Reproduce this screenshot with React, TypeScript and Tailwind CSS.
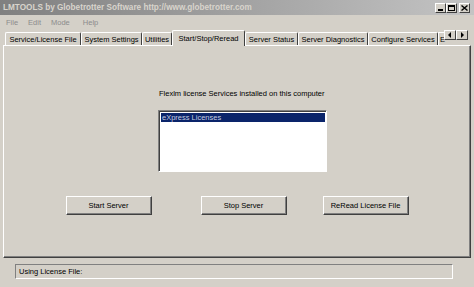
import React from "react";

const tabs = [
  { label: "Service/License File", w: "w-[76px]" },
  { label: "System Settings", w: "w-[61px]" },
  { label: "Utilities", w: "w-[30px]" },
  { label: "Start/Stop/Reread", w: "w-[73px]", active: true },
  { label: "Server Status", w: "w-[53px]" },
  { label: "Server Diagnostics", w: "w-[70px]" },
  { label: "Configure Services", w: "w-[70px]" },
];

function Btn({ label, cls }: { label: string; cls: string }) {
  return (
    <div className={`${cls} h-[19px] border border-t-white border-l-white border-r-[#404040] border-b-[#404040] bg-[#d4d0c8]`}>
      <div className="h-full w-full border-r border-b border-[#808080] flex items-center justify-center text-[7.5px] leading-[9px] text-black">
        {label}
      </div>
    </div>
  );
}

function CtrlBtn({ children, w = "w-[11px]" }: { children: React.ReactNode; w?: string }) {
  return (
    <div className={`${w} h-[10px] bg-[#d4d0c8] border border-t-white border-l-white border-r-[#404040] border-b-[#404040] flex items-center justify-center`}>
      {children}
    </div>
  );
}

export default function App() {
  return (
    <div
      className="w-[474px] h-[287px] bg-[#d4d0c8] flex flex-col overflow-hidden text-black"
      style={{ fontFamily: '"Liberation Sans", Arial, sans-serif' }}
    >
      {/* Title bar */}
      <div className="h-[15px] bg-gradient-to-r from-[#808080] to-[#c4c4c4] flex items-center pl-[3px] pr-[4px]">
        <span className="text-[8.2px] font-bold text-[#d8d4cc] leading-[10px] whitespace-nowrap">
          LMTOOLS by Globetrotter Software http://www.globetrotter.com
        </span>
        <div className="ml-auto flex items-center">
          <CtrlBtn>
            <div className="w-[5px] h-[2px] bg-black mt-[4px] -ml-[1px]" />
          </CtrlBtn>
          <CtrlBtn>
            <div className="w-[7px] h-[6px] border border-black border-t-2" />
          </CtrlBtn>
          <div className="w-[2px]" />
          <CtrlBtn>
            <svg width="7" height="6" viewBox="0 0 7 6">
              <path d="M0.5 0.5 L6.5 5.5 M6.5 0.5 L0.5 5.5" stroke="black" strokeWidth="1.4" />
            </svg>
          </CtrlBtn>
        </div>
      </div>

      {/* Menu bar */}
      <div className="h-[15px] flex items-center text-[7.5px] leading-[9px] text-[#8c8c8c]">
        <span className="ml-[6px]">File</span>
        <span className="ml-[10px]">Edit</span>
        <span className="ml-[10px]">Mode</span>
        <span className="ml-[13px]">Help</span>
      </div>

      {/* Tab row */}
      <div className="h-[15px] flex items-end pl-[5px]">
        <div className="flex items-end w-[439px]">
          {tabs.map((t) =>
            t.active ? (
              <div
                key={t.label}
                className={`${t.w} shrink-0 h-[16px] -mb-[1px] bg-[#d4d0c8] border-t border-l border-white border-r border-r-[#404040] rounded-t-[2px] flex items-center justify-center text-[7.5px] leading-[9px] whitespace-nowrap relative z-10`}
              >
                {t.label}
              </div>
            ) : (
              <div
                key={t.label}
                className={`${t.w} shrink-0 h-[13px] border-t border-l border-white border-r border-r-[#404040] rounded-t-[2px] flex items-center justify-center text-[7.5px] leading-[9px] whitespace-nowrap`}
              >
                {t.label}
              </div>
            )
          )}
          <div className="w-[6px] shrink-0 h-[13px] border-t border-l border-white flex items-center pl-[1px] text-[7.5px] leading-[9px]">
            E
          </div>
        </div>
        <div className="flex items-center mb-[5px]">
          <CtrlBtn w="w-[12px]">
            <svg width="4" height="6" viewBox="0 0 4 6">
              <path d="M3 0 L0 3 L3 6 Z" fill="black" />
            </svg>
          </CtrlBtn>
          <CtrlBtn w="w-[12px]">
            <svg width="4" height="6" viewBox="0 0 4 6">
              <path d="M1 0 L4 3 L1 6 Z" fill="black" />
            </svg>
          </CtrlBtn>
        </div>
      </div>

      {/* Panel */}
      <div className="mx-[3px] w-[468px] h-[213px] border border-t-white border-l-white border-r-[#404040] border-b-[#404040]">
        <div className="h-full w-full border-r border-b border-[#808080] flex flex-col">
          <div className="mt-[43px] pl-[155px] text-[7.5px] leading-[9px] whitespace-nowrap">
            Flexlm license Services installed on this computer
          </div>
          <div className="mt-[12px] ml-[154px] w-[169px] h-[62px] border border-t-[#808080] border-l-[#808080] border-r-white border-b-white">
            <div className="h-full w-full border-t border-l border-[#404040] bg-white p-[1px]">
              <div className="h-[9px] bg-[#0a246a] text-[#c4cce0] text-[7.5px] leading-[9px] pl-[1px] whitespace-nowrap">
                eXpress Licenses
              </div>
            </div>
          </div>
          <div className="mt-[24px] flex">
            <Btn label="Start Server" cls="ml-[62px] w-[86px]" />
            <Btn label="Stop Server" cls="ml-[49px] w-[86px]" />
            <Btn label="ReRead License File" cls="ml-[36px] w-[86px]" />
          </div>
        </div>
      </div>

      {/* Status bar */}
      <div className="flex-1 pt-[6px] pl-[15px]">
        <div className="w-[438px] h-[15px] border border-t-[#808080] border-l-[#808080] border-r-white border-b-white flex items-center pl-[3px] text-[7.5px] leading-[9px]">
          Using License File:
        </div>
      </div>
    </div>
  );
}
